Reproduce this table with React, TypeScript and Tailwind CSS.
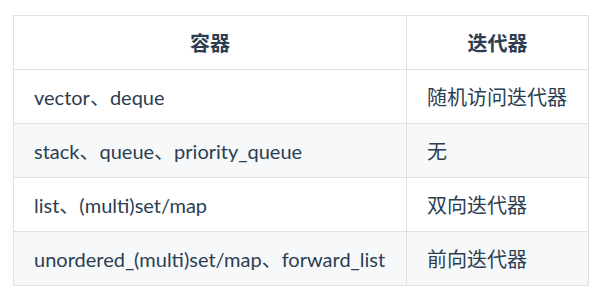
export default function App() {
  const rows = [
    ["vector、deque", "随机访问迭代器"],
    ["stack、queue、priority_queue", "无"],
    ["list、(multi)set/map", "双向迭代器"],
    ["unordered_(multi)set/map、forward_list", "前向迭代器"],
  ];
  return (
    <div
      className="w-[605px] h-[304px] bg-white pl-[13px] pt-[15px] text-[#2c3e50] text-[20px]"
      style={{ fontFamily: 'Lato, "Noto Sans CJK SC", sans-serif' }}
    >
      <table className="border-collapse w-[575px] table-fixed">
        <colgroup>
          <col className="w-[393px]" />
          <col className="w-[182px]" />
        </colgroup>
        <thead>
          <tr className="h-[54px]">
            <th className="border border-[#dfe2e5] px-5 font-bold text-center">容器</th>
            <th className="border border-[#dfe2e5] px-5 font-bold text-center">迭代器</th>
          </tr>
        </thead>
        <tbody>
          {rows.map((r, i) => (
            <tr key={i} className={`h-[54px] ${i % 2 === 1 ? "bg-[#f6f8fa]" : "bg-white"}`}>
              <td className="border border-[#dfe2e5] px-5 whitespace-nowrap">{r[0]}</td>
              <td className="border border-[#dfe2e5] px-5 whitespace-nowrap">{r[1]}</td>
            </tr>
          ))}
        </tbody>
      </table>
    </div>
  );
}
